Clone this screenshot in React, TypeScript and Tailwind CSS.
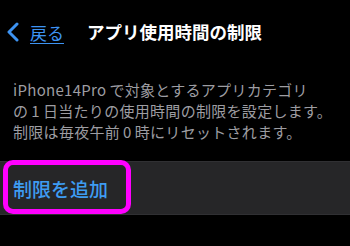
const App = () => {
  return (
    <div className="relative w-[350px] h-[246px] overflow-hidden bg-black font-['Noto_Sans_CJK_JP','Noto_Sans',sans-serif]">
      <header className="flex items-center h-[64px] pl-[6px]">
        <svg width="14" height="20" viewBox="0 0 14 20" className="text-[#3d93f2]">
          <path d="M11 2 L3 10 L11 18" fill="none" stroke="currentColor" strokeWidth="3" strokeLinecap="round" strokeLinejoin="round" />
        </svg>
        <a className="ml-[10px] text-[17px] leading-none text-[#3d93f2] underline underline-offset-[3px] decoration-1">
          戻る
        </a>
        <h1 className="ml-[23px] text-[17.5px] leading-none font-bold text-white">
          アプリ使用時間の制限
        </h1>
      </header>

      <p className="mt-[15px] px-[13px] text-[15px] leading-[21px] text-[#9d9da2] whitespace-nowrap tracking-[0.3px]">
        iPhone14Pro<span className="ml-[3px]">で対象とするアプリカテゴリ</span>
        <br />
        の<span className="mx-[3px]">1</span>日当たりの使用時間の制限を設定します。
        <br />
        制限は毎夜午前<span className="mx-[3px]">0</span>時にリセットされます。
      </p>

      <div className="mt-[19px] h-[54px] flex items-center px-[13px] bg-[#262628] border-y border-[#303033]">
        <span className="text-[19px] leading-none font-medium text-[#3e9cf2]">制限を追加</span>
      </div>

      <div className="absolute left-[3px] top-[160px] w-[128px] h-[54px] rounded-[10px] border-[5px] border-[#ff00ff]" />
    </div>
  );
};

export default App;
